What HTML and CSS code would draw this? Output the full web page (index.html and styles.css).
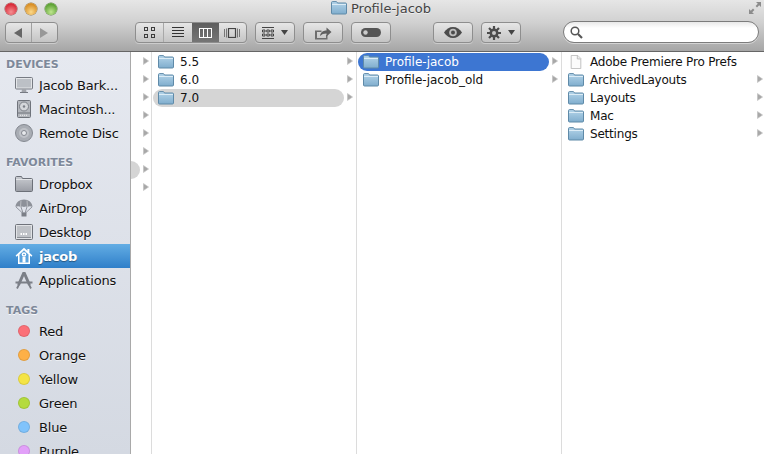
FILE: index.html
```html
<!DOCTYPE html>
<html>
<head>
    <title>Profile-jacob</title>
    <link rel="stylesheet" href="styles.css">
</head>
<body>
    <svg class="defs" width="0" height="0">
        <defs>
            <linearGradient id="folderFill" x1="0" y1="0" x2="0" y2="1">
                <stop offset="0" stop-color="#b5d5ea"/>
                <stop offset="1" stop-color="#7fadcd"/>
            </linearGradient>
            <linearGradient id="grayFill" x1="0" y1="0" x2="0" y2="1">
                <stop offset="0" stop-color="#c9ccd1"/>
                <stop offset="1" stop-color="#9a9da5"/>
            </linearGradient>
            <symbol id="folder" viewBox="0 0 16 14">
                <path d="M.5 3V1.600C.5 1 .9.6 1.500.6h3.600c.5 0 .8.2 1 .6l.4.8h8c.6 0 1 .4 1 1v9c0 .6-.4 1-1 1h-13c-.6 0-1-.4-1-1z" fill="url(#folderFill)" stroke="#5f8aa8"/>
                <path d="M1 3.500h14" stroke="#dcecf6"/>
            </symbol>
            <symbol id="arrow" viewBox="0 0 6 8">
                <path d="M.4.4 5.600 4 .4 7.600z" fill="#a8a8a8" stroke="#c4c4c4" stroke-width=".6"/>
            </symbol>
        </defs>
    </svg>

    <div class="window">
        <header class="toolbar">
            <div class="titlebar">
                <div class="lights">
                    <span class="light red"></span>
                    <span class="light amber"></span>
                    <span class="light green"></span>
                </div>
                <div class="title">
                    <svg class="title-folder"><use href="#folder"/></svg>
                    <span>Profile-jacob</span>
                </div>
                <svg class="fullscreen" width="14" height="14" viewBox="0 0 14 14">
                    <path d="M8 1h5v5l-1.800-1.800L9 6.400 7.600 5l2.200-2.200zM6 13H1V8l1.800 1.800L5 7.600 6.400 9 4.200 11.200z" fill="#8c8c8c"/>
                </svg>
            </div>
            <div class="tools">
                <div class="btn nav">
                    <span class="seg seg-nav">
                        <svg width="8" height="10" viewBox="0 0 8 10"><path d="M8 0v10L0 5z" fill="#666"/></svg>
                    </span>
                    <span class="seg seg-nav">
                        <svg width="8" height="10" viewBox="0 0 8 10"><path d="M0 0v10l8-5z" fill="#989898"/></svg>
                    </span>
                </div>
                <div class="btn views">
                    <span class="seg seg-view">
                        <svg width="11" height="11" viewBox="0 0 11 11" fill="none" stroke="#3c3c3c"><rect x=".5" y=".5" width="3" height="3"/><rect x="7.500" y=".5" width="3" height="3"/><rect x=".5" y="7.500" width="3" height="3"/><rect x="7.500" y="7.500" width="3" height="3"/></svg>
                    </span>
                    <span class="seg seg-view seg-split">
                        <svg width="12" height="11" viewBox="0 0 12 11" stroke="#333"><path d="M0 .5h12M0 3.500h12M0 6.500h12M0 9.500h12"/></svg>
                    </span>
                    <span class="seg seg-view seg-on">
                        <svg width="13" height="10" viewBox="0 0 13 10" fill="none" stroke="#fff"><rect x=".5" y=".5" width="12" height="9"/><path d="M4.500.5v9M8.500.5v9"/></svg>
                    </span>
                    <span class="seg seg-view">
                        <svg width="16" height="10" viewBox="0 0 16 10" fill="none" stroke="#444"><path d="M.5 1v8M2.500.5v9M13.500.5v9M15.500 1v8" stroke="#777"/><rect x="4.500" y=".5" width="7" height="9" stroke-width="1.200"/></svg>
                    </span>
                </div>
                <div class="btn single">
                    <svg width="12" height="12" viewBox="0 0 12 12" fill="none" stroke="#333" stroke-width=".9"><path d="M0 .5h12M0 11.500h12"/><path d="M.5 3h2.500v2H.5zM4.800 3h2.500v2H4.800zM9 3h2.500v2H9zM.5 7h2.500v2H.5zM4.800 7h2.500v2H4.800zM9 7h2.500v2H9z"/></svg>
                    <svg class="caret" width="7" height="5" viewBox="0 0 7 5"><path d="M0 0h7L3.500 5z" fill="#444"/></svg>
                </div>
                <div class="btn single">
                    <svg width="18" height="14" viewBox="0 0 18 14"><path d="M1 4.500h6.500v1.500H3v6h9V9h1.500v4.500H1z" fill="#6e6e6e"/><path d="M6 10c.4-3.500 2.800-5.400 6.500-5.500V1.500L17.500 6l-5 4.500V7.500c-2.800 0-4.800.8-6.500 2.500z" fill="#5f5f5f"/></svg>
                </div>
                <div class="btn single">
                    <svg width="20" height="9" viewBox="0 0 20 9"><rect width="20" height="9" rx="4.500" fill="#555"/><circle cx="4.500" cy="4.500" r="2.200" fill="#ccc"/></svg>
                </div>
                <div class="btn single eye">
                    <svg width="18" height="11" viewBox="0 0 18 11"><path d="M0 5.500C2.200 2 5.300 0 9 0s6.800 2 9 5.500C15.800 9 12.700 11 9 11S2.200 9 0 5.500z" fill="#4c4c4c"/><circle cx="9" cy="5.500" r="3.800" fill="#bdbdbd"/><circle cx="9" cy="5.500" r="2" fill="#4c4c4c"/></svg>
                </div>
                <div class="btn single">
                    <svg width="14" height="14" viewBox="0 0 14 14"><path d="M7 0v14M0 7h14M2 2l10 10M12 2 2 12" stroke="#4c4c4c" stroke-width="2.200"/><circle cx="7" cy="7" r="4.500" fill="#4c4c4c"/><circle cx="7" cy="7" r="2" fill="#c8c8c8"/></svg>
                    <svg class="caret" width="7" height="5" viewBox="0 0 7 5"><path d="M0 0h7L3.500 5z" fill="#444"/></svg>
                </div>
                <div class="search">
                    <svg width="13" height="13" viewBox="0 0 13 13" fill="none" stroke="#555"><circle cx="5" cy="5" r="3.800" stroke-width="1.500"/><path d="m8 8 4 4" stroke-width="2.200"/></svg>
                </div>
            </div>
        </header>

        <div class="main">
            <aside class="sidebar">
                <h4 class="group group-first">DEVICES</h4>
                <div class="place">
                    <svg class="place-icon" viewBox="0 0 18 18"><rect x=".5" y="1.500" width="17" height="11.500" rx="1" fill="#e4e6e9" stroke="#777b83"/><rect x="2" y="3" width="14" height="8.500" fill="#bcc0c6"/><path d="M7 13h4l.5 3h-5z" fill="#a2a5ab"/><path d="M5 16.500h8" stroke="#777b83"/></svg>
                    <span>Jacob Bark...</span>
                </div>
                <div class="place">
                    <svg class="place-icon" viewBox="0 0 18 18"><rect x="2.500" y=".5" width="13" height="17" rx="1" fill="#b3b6bc" stroke="#6f737b"/><circle cx="9" cy="6.500" r="4.500" fill="#d4d6da" stroke="#7b7f87"/><circle cx="9" cy="6.500" r="1.200" fill="#7b7f87"/><path d="M3 13h12" stroke="#6f737b"/><path d="M5 15.300h8" stroke="#eee" stroke-dasharray="1 1"/></svg>
                    <span>Macintosh...</span>
                </div>
                <div class="place">
                    <svg class="place-icon" viewBox="0 0 18 18"><circle cx="9" cy="9" r="8.500" fill="#a9adb4" stroke="#858991"/><circle cx="9" cy="9" r="5" fill="#bfc2c8"/><circle cx="9" cy="9" r="2.500" fill="#e7e9ec" stroke="#858991"/></svg>
                    <span>Remote Disc</span>
                </div>

                <h4 class="group">FAVORITES</h4>
                <div class="place">
                    <svg class="place-icon" viewBox="0 0 18 18"><path d="M.5 4V2.500C.5 2 1 1.500 1.500 1.500h5l1 2h9c.6 0 1 .4 1 1v11c0 .6-.4 1-1 1h-15c-.6 0-1-.4-1-1z" fill="url(#grayFill)" stroke="#6c7078"/><path d="M1 4.500h16" stroke="#e2e4e7"/></svg>
                    <span>Dropbox</span>
                </div>
                <div class="place">
                    <svg class="place-icon" viewBox="0 0 18 18"><path d="M.5 8C.5 3.500 4.500.5 9 .5s8.500 3 8.500 7.500c-1.800-1-3.600-1-5 0-1-.8-2.300-.8-3.500 0-1.200-.8-2.500-.8-3.500 0-1.400-1-3.200-1-5 0z" fill="#8d9199"/><path d="M6 1.500 5.500 8M12 1.500 12.500 8" stroke="#c5c8cd" stroke-width=".8"/><path d="M1 8l6.500 6M17 8l-6.500 6M6 8l2 6M12 8l-2 6" stroke="#7f838b" stroke-width=".8"/><rect x="6.500" y="13.500" width="5" height="4" fill="#7b7f87"/></svg>
                    <span>AirDrop</span>
                </div>
                <div class="place">
                    <svg class="place-icon" viewBox="0 0 18 18"><rect x=".5" y="1.500" width="17" height="15" rx="1" fill="#e1e3e6" stroke="#6f737b"/><rect x="2" y="3" width="14" height="12" fill="#bfc2c7"/><path d="M5.500 11h7" stroke="#fff" stroke-width="2" stroke-dasharray="1.500 1"/><path d="M2 14.500h14" stroke="#8b8f96"/></svg>
                    <span>Desktop</span>
                </div>
                <div class="place place-on">
                    <svg class="place-icon" viewBox="0 0 18 18"><path d="M9 .8.600 8.600l1 1.100L3 8.400V17h12V8.400l1.400 1.300 1-1.100-3-2.800V2h-2v1.800z" fill="#fff"/><path d="M4.500 7.500 9 3.300l4.500 4.200v8h-9z" fill="#5aa2dd"/><circle cx="9" cy="7.500" r="2.300" fill="#fff"/><rect x="7.500" y="10" width="3" height="5.500" fill="#fff"/><circle cx="9" cy="7.500" r=".8" fill="#3f88cf"/></svg>
                    <span>jacob</span>
                </div>
                <div class="place">
                    <svg class="place-icon" viewBox="0 0 18 18" fill="none" stroke="#7b7f87"><path d="M9 1.500 3.500 14M9 1.500 14.500 14" stroke-width="3"/><path d="M.5 11.500h17" stroke-width="2"/><path d="M2 17.500l2-4M16 17.500l-2-4" stroke-width="1.800"/></svg>
                    <span>Applications</span>
                </div>

                <h4 class="group group-tags">TAGS</h4>
                <div class="place"><span class="tag tag-red"></span><span>Red</span></div>
                <div class="place"><span class="tag tag-orange"></span><span>Orange</span></div>
                <div class="place"><span class="tag tag-yellow"></span><span>Yellow</span></div>
                <div class="place"><span class="tag tag-green"></span><span>Green</span></div>
                <div class="place"><span class="tag tag-blue"></span><span>Blue</span></div>
                <div class="place"><span class="tag tag-purple"></span><span>Purple</span></div>
            </aside>

            <section class="column col-stub">
                <div class="stub-knob"></div>
                <div class="stub-row"><svg class="arrow"><use href="#arrow"/></svg></div>
                <div class="stub-row"><svg class="arrow"><use href="#arrow"/></svg></div>
                <div class="stub-row"><svg class="arrow"><use href="#arrow"/></svg></div>
                <div class="stub-row"><svg class="arrow"><use href="#arrow"/></svg></div>
                <div class="stub-row"><svg class="arrow"><use href="#arrow"/></svg></div>
                <div class="stub-row"><svg class="arrow"><use href="#arrow"/></svg></div>
                <div class="stub-row"><svg class="arrow"><use href="#arrow"/></svg></div>
                <div class="stub-row"><svg class="arrow"><use href="#arrow"/></svg></div>
            </section>

            <section class="column">
                <div class="row">
                    <div class="pill"><svg class="folder"><use href="#folder"/></svg><span>5.5</span></div>
                    <svg class="arrow"><use href="#arrow"/></svg>
                </div>
                <div class="row">
                    <div class="pill"><svg class="folder"><use href="#folder"/></svg><span>6.0</span></div>
                    <svg class="arrow"><use href="#arrow"/></svg>
                </div>
                <div class="row">
                    <div class="pill pill-gray"><svg class="folder"><use href="#folder"/></svg><span>7.0</span></div>
                    <svg class="arrow"><use href="#arrow"/></svg>
                </div>
            </section>

            <section class="column">
                <div class="row">
                    <div class="pill pill-blue"><svg class="folder"><use href="#folder"/></svg><span>Profile-jacob</span></div>
                    <svg class="arrow"><use href="#arrow"/></svg>
                </div>
                <div class="row">
                    <div class="pill"><svg class="folder"><use href="#folder"/></svg><span>Profile-jacob_old</span></div>
                    <svg class="arrow"><use href="#arrow"/></svg>
                </div>
            </section>

            <section class="column col-last">
                <div class="row">
                    <div class="pill">
                        <svg class="folder" viewBox="0 0 16 16"><path d="M2.500.5h7.500l3.500 3.500v11.500h-11z" fill="#fbfbfb" stroke="#b9b9b9"/><path d="M9.500.5v4h4" fill="#eee" stroke="#b9b9b9"/></svg>
                        <span>Adobe Premiere Pro Prefs</span>
                    </div>
                </div>
                <div class="row">
                    <div class="pill"><svg class="folder"><use href="#folder"/></svg><span>ArchivedLayouts</span></div>
                    <svg class="arrow"><use href="#arrow"/></svg>
                </div>
                <div class="row">
                    <div class="pill"><svg class="folder"><use href="#folder"/></svg><span>Layouts</span></div>
                    <svg class="arrow"><use href="#arrow"/></svg>
                </div>
                <div class="row">
                    <div class="pill"><svg class="folder"><use href="#folder"/></svg><span>Mac</span></div>
                    <svg class="arrow"><use href="#arrow"/></svg>
                </div>
                <div class="row">
                    <div class="pill"><svg class="folder"><use href="#folder"/></svg><span>Settings</span></div>
                    <svg class="arrow"><use href="#arrow"/></svg>
                </div>
            </section>
        </div>
    </div>
</body>
</html>
```

FILE: styles.css
```css
html, body {
    height: 100%;
    margin: 0;
    overflow: hidden;
}

body {
    font-family: "DejaVu Sans", sans-serif;
    font-size: 12px;
    color: #111;
    background-color: #fff;
}

.defs {
    display: block;
    height: 0;
}

.window {
    display: flex;
    flex-direction: column;
    height: 454px;
}

/* toolbar */
.toolbar {
    height: 51px;
    flex: none;
    background: linear-gradient(#e6e6e6, #d0d0d0 45%, #a6a6a6);
    border-bottom: 1px solid #666;
}

.titlebar {
    position: relative;
    display: flex;
    justify-content: center;
    height: 21px;
}

.lights {
    position: absolute;
    left: 5px;
    top: 3px;
    display: flex;
    gap: 8px;
}

.light {
    width: 12px;
    height: 12px;
    border-radius: 50%;
}

.red {
    background: radial-gradient(circle at 50% 75%, #f58f92, #d92c3a 70%);
    box-shadow: 0 0 0 .5px #8d4a4a;
}

.amber {
    background: radial-gradient(circle at 50% 75%, #fbd98a, #d98f26 70%);
    box-shadow: 0 0 0 .5px #8f7440;
}

.green {
    background: radial-gradient(circle at 50% 75%, #bfe68f, #5fa336 70%);
    box-shadow: 0 0 0 .5px #5f8248;
}

.title {
    display: flex;
    align-items: center;
    gap: 4px;
    height: 16px;
    margin-right: 2px;
    font-size: 13px;
    color: #444;
    text-shadow: 0 1px 0 #eee;
}

.title-folder {
    width: 16px;
    height: 14px;
}

.fullscreen {
    position: absolute;
    right: 2px;
    top: 1px;
}

.tools {
    display: flex;
    align-items: flex-start;
    padding-left: 5px;
}

.btn {
    display: flex;
    align-items: center;
    justify-content: center;
    box-sizing: border-box;
    height: 21px;
    margin-top: 1px;
    border: 1px solid #8e8e8e;
    border-radius: 4px;
    background: linear-gradient(#e6e6e6, #c4c4c4);
    box-shadow: 0 1px 0 rgba(255, 255, 255, 0.35);
}

.nav {
    width: 53px;
    margin-right: 77px;
}

.views {
    width: 112px;
    margin-right: 8px;
    overflow: hidden;
}

.single {
    width: 40px;
    gap: 7px;
    margin-right: 8px;
}

.eye {
    margin-left: 34px;
}

.caret {
    flex: none;
}

.seg {
    display: flex;
    align-items: center;
    justify-content: center;
    height: 100%;
}

.seg-nav {
    width: 25px;
}

.seg-nav + .seg-nav {
    width: 26px;
    border-left: 1px solid #a0a0a0;
}

.seg-view {
    flex: 1;
}

.seg-split {
    border-left: 1px solid #a8a8a8;
}

.seg-on {
    background: linear-gradient(#5e5e5e, #757575);
}

.search {
    display: flex;
    align-items: center;
    box-sizing: border-box;
    width: 196px;
    height: 22px;
    margin-left: 34px;
    padding-left: 6px;
    border: 1px solid #7c7c7c;
    border-radius: 11px;
    background: linear-gradient(#e9e9e9, #fff 30%);
    box-shadow: 0 1px 0 rgba(255, 255, 255, 0.45);
}

/* main area */
.main {
    display: flex;
    flex: 1;
    min-height: 0;
}

.sidebar {
    flex: none;
    box-sizing: border-box;
    width: 131px;
    overflow: hidden;
    background: linear-gradient(#e6e9f0, #d4d9e2);
    border-right: 1px solid #a9a9a9;
}

.group {
    height: 14px;
    margin: 11px 0 2px;
    padding-left: 6px;
    font-size: 11px;
    line-height: 14px;
    font-weight: bold;
    color: #7d8899;
    text-shadow: 0 1px 0 #f6f7f9;
}

.group-first {
    margin: 6px 0 1px;
}

.group-tags {
    margin: 12px 0 1px;
}

.place {
    display: flex;
    align-items: center;
    gap: 6px;
    height: 24px;
    padding-left: 15px;
    font-size: 13px;
    letter-spacing: -0.2px;
    color: #111;
    text-shadow: 0 1px 0 rgba(255, 255, 255, 0.6);
    white-space: nowrap;
}

.place-icon {
    flex: none;
    width: 18px;
    height: 18px;
}

.place-on {
    font-weight: bold;
    color: #fff;
    text-shadow: 0 1px 1px rgba(0, 0, 0, 0.4);
    background: linear-gradient(#63ade4, #2f7fc9);
}

.tag {
    flex: none;
    box-sizing: border-box;
    width: 12px;
    height: 12px;
    margin: 0 3px;
    border-radius: 50%;
    border: 1px solid rgba(0, 0, 0, 0.1);
}

.tag-red { background-color: #fb7078; }
.tag-orange { background-color: #fdb046; }
.tag-yellow { background-color: #f4e445; }
.tag-green { background-color: #b4db3c; }
.tag-blue { background-color: #80c3fb; }
.tag-purple { background-color: #e2a0f9; }

/* columns */
.column {
    flex: none;
    box-sizing: border-box;
    width: 205px;
    padding-top: 1px;
    border-right: 1px solid #dcdcdc;
}

.col-stub {
    position: relative;
    width: 21px;
}

.col-last {
    flex: 1;
    border-right: 0;
    letter-spacing: -0.2px;
}

.stub-knob {
    position: absolute;
    left: 0;
    top: 109px;
    width: 9px;
    height: 18px;
    border-radius: 0 9px 9px 0;
    background-color: #d5d5d5;
}

.stub-row {
    display: flex;
    align-items: center;
    justify-content: flex-end;
    height: 18px;
    padding-right: 2px;
}

.row {
    display: flex;
    align-items: center;
    height: 18px;
    padding-left: 1px;
}

.pill {
    display: flex;
    align-items: center;
    flex: none;
    gap: 6px;
    width: 191px;
    height: 18px;
    padding-left: 5px;
    box-sizing: border-box;
    border-radius: 9px;
    white-space: nowrap;
}

.pill-gray {
    background-color: #d5d5d5;
}

.pill-blue {
    color: #fff;
    background-color: #3d76d2;
}

.arrow {
    flex: none;
    width: 6px;
    height: 8px;
    margin: 0 0 2px 3px;
}

.folder {
    flex: none;
    width: 16px;
    height: 14px;
}
```
